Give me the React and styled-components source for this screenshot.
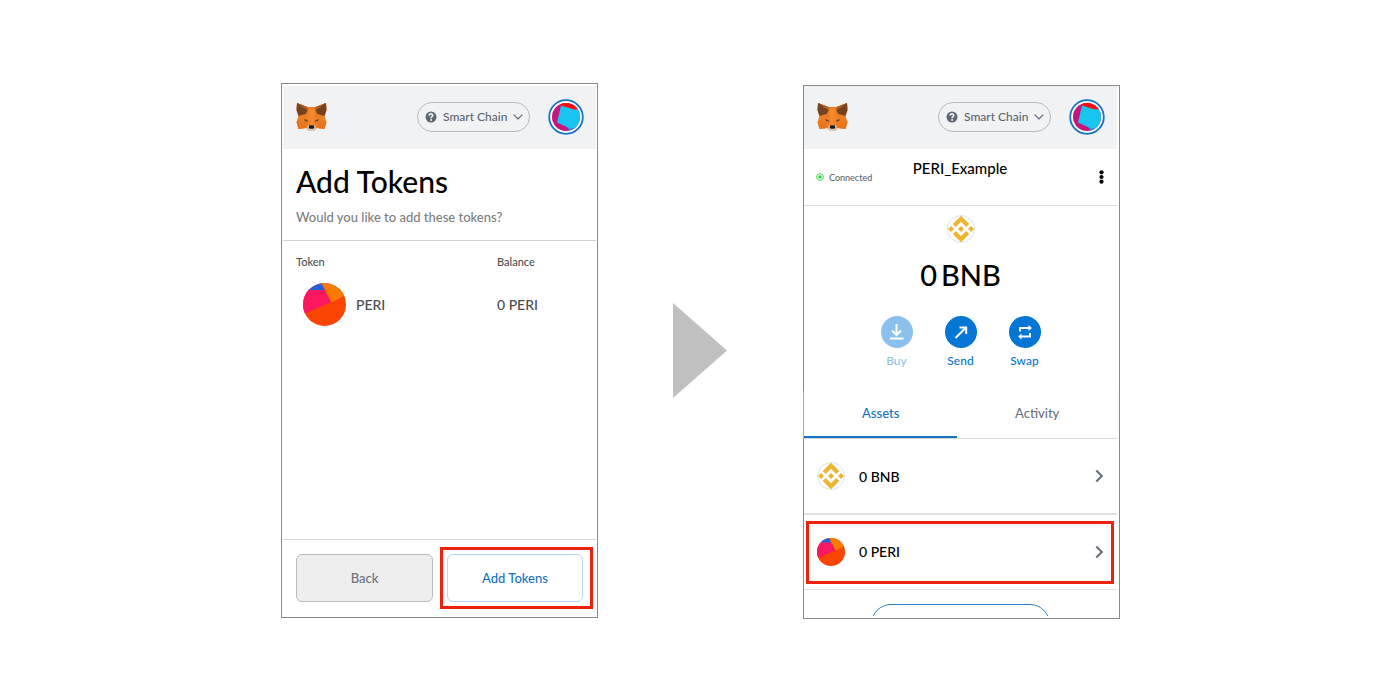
import React from "react";
import styled, { createGlobalStyle } from "styled-components";

const Global = createGlobalStyle`
  *, *::before, *::after { box-sizing: border-box; }
  body { margin: 0; background: #fff; font-family: Lato, "Open Sans", sans-serif; font-weight: 500; color: #000; }
  button { font-family: inherit; font-weight: 500; cursor: pointer; padding: 0; }
  h1, h2, p { margin: 0; font-weight: 500; }
  svg { display: block; flex: none; }
`;

const Page = styled.main`
  display: grid;
  grid-template-columns: minmax(300px, 1fr) 205px minmax(300px, 1fr);
  align-items: start;
  padding: 83px 280px 80px 281px;
`;

const Panel = styled.section`
  display: flex;
  flex-direction: column;
  min-height: ${(p) => p.$minHeight}px;
  margin-top: ${(p) => p.$drop || 0}px;
  border: 1px solid #87898b;
  padding: ${(p) => p.$inset};
`;

const Between = styled.div`
  display: flex;
  align-self: center;
  justify-content: center;
  padding: 0 2px 2px 0;
`;

const TopBar = styled.header`
  display: flex;
  align-items: center;
  height: 63px;
  padding: 0 12px 2px 13px;
  background: #f0f2f4;
`;

const Network = styled.button`
  display: flex;
  align-items: center;
  gap: 6px;
  width: 113px;
  height: 30px;
  margin-left: auto;
  margin-right: 18px;
  padding: 0 7px;
  border: 1px solid #b6babf;
  border-radius: 15px;
  background: transparent;
  color: #5d6671;
  font-size: 12px;
  line-height: 16px;
  white-space: nowrap;

  span { flex: 1; text-align: left; }
`;

const Account = styled.button`
  display: flex;
  border: 0;
  background: none;
`;

const Intro = styled.div`
  padding: 12px 13px 14px;
  border-bottom: 1px solid #cfd1d3;
`;

const Title = styled.h1`
  font-size: 30px;
  line-height: 40px;
`;

const Lead = styled.p`
  margin-top: 7px;
  color: #7c7e80;
  font-size: 13px;
  line-height: 18px;
`;

const TokenTable = styled.table`
  width: 100%;
  margin-top: 12px;
  border-collapse: collapse;
  table-layout: fixed;
  color: #4b4d50;

  th, td { padding: 0 0 0 13px; text-align: left; font-weight: 500; }
  th { font-size: 11px; line-height: 18px; }
  td { padding-top: 12px; font-size: 14px; line-height: 18px; }
  th:last-child, td:last-child { width: 99px; padding-left: 0; }
`;

const TokenCell = styled.div`
  display: flex;
  align-items: center;
  gap: 10px;
  padding-left: 7px;
`;

const Footer = styled.footer`
  display: flex;
  align-items: center;
  gap: 7px;
  margin-top: auto;
  padding: 7px 3px 8px 13px;
  border-top: 1px solid #d4d6d8;
`;

const ActionButton = styled.button`
  display: block;
  flex: 1;
  width: 100%;
  height: 48px;
  border: 1px solid ${(p) => (p.$primary ? "#b5d6f0" : "#b9bbbd")};
  border-radius: 6px;
  background: ${(p) => (p.$primary ? "#fff" : "#eee")};
  color: ${(p) => (p.$primary ? "#1673c4" : "#6a737d")};
  font-size: 13px;
`;

const Highlight = styled.div`
  flex: ${(p) => p.$flex || "none"};
  margin: ${(p) => p.$margin || 0};
  padding: ${(p) => p.$padding};
  border: 3px solid #ee220c;
`;

const StatusBar = styled.div`
  display: grid;
  grid-template-columns: 1fr auto 1fr;
  align-items: center;
  height: 57px;
  padding: 0 13px 0 12px;
  border-bottom: 1px solid #d9dbdd;
`;

const Connected = styled.span`
  display: flex;
  align-items: center;
  gap: 5px;
  color: #5d6671;
  font-size: 9px;
`;

const Dot = styled.i`
  width: 8px;
  height: 8px;
  border: 1px solid #5fdc6b;
  border-radius: 50%;
  background: radial-gradient(circle, #28d03c 1px, #d7f7da 2px);
`;

const AccountName = styled.h2`
  padding-bottom: 18px;
  font-size: 15px;
  line-height: 20px;
`;

const Menu = styled.button`
  display: flex;
  justify-self: end;
  border: 0;
  background: none;
`;

const Overview = styled.div`
  display: flex;
  flex-direction: column;
  align-items: center;
  padding: 9px 0 20px;
`;

const Amount = styled.p`
  display: flex;
  gap: 4px;
  margin-top: 12px;
  font-size: 29px;
  line-height: 40px;
`;

const Actions = styled.div`
  display: flex;
  margin-top: 21px;
`;

const RoundAction = styled.button`
  display: flex;
  flex-direction: column;
  align-items: center;
  gap: 4px;
  width: 64px;
  border: 0;
  background: none;
  color: #0376c9;
  font-size: 12px;
  line-height: 18px;
  opacity: ${(p) => (p.disabled ? 0.45 : 1)};
`;

const Tabs = styled.div`
  display: flex;
  height: 49px;
  border-bottom: 1px solid #d6d8da;
  box-shadow: 0 1px 2px #e8e8e8;
`;

const Tab = styled.button`
  flex: ${(p) => (p.$active ? "0 0 49%" : "1")};
  border: 0;
  border-bottom: 2px solid ${(p) => (p.$active ? "#1673c4" : "transparent")};
  background: none;
  color: ${(p) => (p.$active ? "#1673c4" : "#6a737d")};
  font-size: 13px;
`;

const AssetRow = styled.button`
  display: flex;
  align-items: center;
  gap: 14px;
  width: 100%;
  height: ${(p) => p.$height}px;
  padding: ${(p) => p.$padding};
  border: 0;
  background: #fff;
  color: #000;
  font-size: 14px;

  span { flex: 1; text-align: left; }
`;

const AssetItem = styled.div`
  border-bottom: ${(p) => p.$line}px solid #dfe1e4;
`;

const MoreClip = styled.div`
  height: 26px;
  padding-top: 14px;
  overflow: hidden;
`;

const MoreButton = styled.button`
  display: block;
  width: 179px;
  height: 40px;
  margin: 0 auto;
  border: 1px solid #2f80c8;
  border-radius: 20px;
  background: #fff;
`;

const Fox = () => (
  <svg width="31" height="28" viewBox="0 0 31 28" role="img" aria-label="MetaMask">
    <path d="M1 0 L11.500 4 H19.500 L30 0 L30.500 7 L28.500 13 L30.500 19 L28.500 26 L20.500 25 L18.500 27.500 H12.500 L10.500 25 L2.500 26 L.5 19 L2.500 13 L.5 7 Z" fill="#ec7d22" />
    <path d="M1 0 L9.500 3.500 L12 7 L9.500 11 L2.500 13 L.5 7 Z" fill="#74421f" />
    <path d="M30 0 L21.500 3.500 L19 7 L21.500 11 L28.500 13 L30.500 7 Z" fill="#74421f" />
    <path d="M1 0 L11.500 4 L12 8 Z M30 0 L19.500 4 L19 8 Z" fill="#b35d20" />
    <path d="M12 6 H19 L18.500 15 L17 23 H14 L12.500 15 Z" fill="#f28a2d" />
    <path d="M8.500 16 L12 17.500 L11.500 18.800 L8.500 17.800 Z M22.500 16 L19 17.500 L19.500 18.800 L22.500 17.800 Z" fill="#70492b" />
    <path d="M.5 19 H9 L10.500 25 L2.500 26 Z M30.500 19 H22 L20.500 25 L28.500 26 Z" fill="#e8741c" />
    <path d="M11 24 L13 22 H18 L20 24 L18.500 27.500 H12.500 Z" fill="#d6cabe" />
    <path d="M13.300 22.300 H17.700 L18.300 24.500 L17.300 25.700 H13.700 L12.700 24.500 Z" fill="#1f1a17" />
  </svg>
);

const Avatar = ({ clip }) => (
  <svg width="36" height="36" viewBox="0 0 36 36" role="img" aria-label="Account">
    <clipPath id={clip}><circle cx="18" cy="18" r="14" /></clipPath>
    <circle cx="18" cy="18" r="16.800" fill="#fff" stroke="#1673c4" strokeWidth="1.800" />
    <g clipPath={`url(#${clip})`}>
      <rect width="36" height="36" fill="#c8147d" />
      <path d="M14 0 L36 4 L28 14 L12 8 Z" fill="#fb0d12" />
      <path d="M18 26 L36 20 V36 H18 L21 31 Z" fill="#238fe0" />
      <path d="M13 6.500 L26 10.500 L36 10 L29 28.500 L22 29.500 L9 23.500 Z" fill="#18c5f1" />
    </g>
  </svg>
);

const Help = () => (
  <svg width="12" height="12" viewBox="0 0 12 12" aria-hidden="true">
    <circle cx="6" cy="6" r="5.500" fill="#5d6671" />
    <path d="M4 4.600 C4.200 2.300 7.900 2.400 7.800 4.500 C7.700 5.700 6.100 5.600 6.100 7.200" fill="none" stroke="#f0f2f4" strokeWidth="1.600" />
    <circle cx="6.100" cy="9" r="1" fill="#f0f2f4" />
  </svg>
);

const ChevronDown = () => (
  <svg width="10" height="6" viewBox="0 0 10 6" fill="none" aria-hidden="true">
    <path d="M.7 .7 L5 5 L9.300 .7" stroke="#5d6671" strokeWidth="1.200" />
  </svg>
);

const ChevronRight = () => (
  <svg width="9" height="14" viewBox="0 0 9 14" fill="none" aria-hidden="true">
    <path d="M1.300 1.500 L6.800 7 L1.300 12.500" stroke="#6a737d" strokeWidth="2.200" />
  </svg>
);

const Peri = ({ size, clip }) => (
  <svg width={size} height={size} viewBox="0 0 43 43" aria-hidden="true">
    <clipPath id={clip}><circle cx="21.500" cy="21.500" r="21.500" /></clipPath>
    <g clipPath={`url(#${clip})`}>
      <rect width="43" height="43" fill="#fa4402" />
      <path d="M0 6.500 L21.500 6.500 L28.500 19 L0 31.500 Z" fill="#fb1861" />
      <path d="M0 0 H19 L22 7 L0 7 Z" fill="#2a5fd8" />
      <path d="M18.500 0 H43 V12 L28.500 19.500 Z" fill="#fa7900" />
    </g>
  </svg>
);

const Bnb = () => (
  <svg width="28" height="28" viewBox="0 0 28 28" aria-hidden="true">
    <circle cx="14" cy="14" r="13.500" fill="#fff" stroke="#dfe1e4" />
    <g fill="#edb52f">
      <path d="M14 .8 L22.200 9 L19.200 12 L14 6.800 L8.800 12 L5.800 9 Z" />
      <path d="M14 27.200 L22.200 19 L19.200 16 L14 21.200 L8.800 16 L5.800 19 Z" />
      <path d="M14 11 L17 14 L14 17 L11 14 Z" />
      <path d="M4 11 L7 14 L4 17 L1 14 Z" />
      <path d="M24 11 L27 14 L24 17 L21 14 Z" />
    </g>
  </svg>
);

const Kebab = () => (
  <svg width="5" height="14" viewBox="0 0 5 14" aria-hidden="true">
    <circle cx="2.500" cy="2.300" r="2.100" /><circle cx="2.500" cy="7" r="2.100" /><circle cx="2.500" cy="11.700" r="2.100" />
  </svg>
);

const glyphs = {
  Buy: <path d="M15.500 8 V19 M11 14.500 L15.500 19 L20 14.500 M9 22.500 H22.500" />,
  Send: <path d="M10.500 22 L21 11.500 M14.500 11.500 H21.200 V18" />,
  Swap: (
    <>
      <path d="M11 15.500 V12 H20 M21 17 V20.500 H12" />
      <path d="M19.500 9 L23 12 L19.500 15 Z M12.500 17.500 L9 20.500 L12.500 23.500 Z" fill="#fff" stroke="none" />
    </>
  ),
};

const Action = ({ name, disabled }) => (
  <RoundAction disabled={disabled}>
    <svg width="32" height="32" viewBox="0 0 32 32" fill="none" stroke="#fff" strokeWidth="2" aria-hidden="true">
      <circle cx="16" cy="16" r="16" fill="#0376d6" stroke="none" />
      {glyphs[name]}
    </svg>
    {name}
  </RoundAction>
);

const WalletBar = ({ id }) => (
  <TopBar>
    <Fox />
    <Network>
      <Help />
      <span>Smart Chain</span>
      <ChevronDown />
    </Network>
    <Account aria-label="Account menu"><Avatar clip={id} /></Account>
  </TopBar>
);

export default function App() {
  return (
    <>
      <Global />
      <Page>
        <Panel $minHeight={535} $inset="2px 1px 0 1px">
          <WalletBar id="avatar-left" />
          <Intro>
            <Title>Add Tokens</Title>
            <Lead>Would you like to add these tokens?</Lead>
          </Intro>
          <TokenTable>
            <thead>
              <tr><th scope="col">Token</th><th scope="col">Balance</th></tr>
            </thead>
            <tbody>
              <tr>
                <td><TokenCell><Peri size={43} clip="peri-large" />PERI</TokenCell></td>
                <td>0 PERI</td>
              </tr>
            </tbody>
          </TokenTable>
          <Footer>
            <ActionButton>Back</ActionButton>
            <Highlight $flex="0 0 153px" $padding="4px 7px 4px 4px">
              <ActionButton $primary>Add Tokens</ActionButton>
            </Highlight>
          </Footer>
        </Panel>

        <Between>
          <svg width="54" height="95" viewBox="0 0 54 95" aria-hidden="true">
            <path d="M0 0 L54 47.500 L0 95 Z" fill="#c0c0c0" />
          </svg>
        </Between>

        <Panel $minHeight={534} $drop={2} $inset="0 2px 2px 0">
          <WalletBar id="avatar-right" />
          <StatusBar>
            <Connected><Dot />Connected</Connected>
            <AccountName>PERI_Example</AccountName>
            <Menu aria-label="Account options"><Kebab /></Menu>
          </StatusBar>
          <Overview>
            <Bnb />
            <Amount><span>0</span><span>BNB</span></Amount>
            <Actions>
              <Action name="Buy" disabled />
              <Action name="Send" />
              <Action name="Swap" />
            </Actions>
          </Overview>
          <Tabs>
            <Tab $active>Assets</Tab>
            <Tab>Activity</Tab>
          </Tabs>
          <AssetItem $line={2}>
            <AssetRow $height={74} $padding="0 13px">
              <Bnb /><span>0 BNB</span><ChevronRight />
            </AssetRow>
          </AssetItem>
          <AssetItem $line={1}>
            <Highlight $margin="6px 3px 5px 2px" $padding="0">
              <AssetRow $height={57} $padding="0 7px 2px 8px">
                <Peri size={28} clip="peri-small" /><span>0 PERI</span><ChevronRight />
              </AssetRow>
            </Highlight>
          </AssetItem>
          <MoreClip><MoreButton aria-label="Add token" /></MoreClip>
        </Panel>
      </Page>
    </>
  );
}
